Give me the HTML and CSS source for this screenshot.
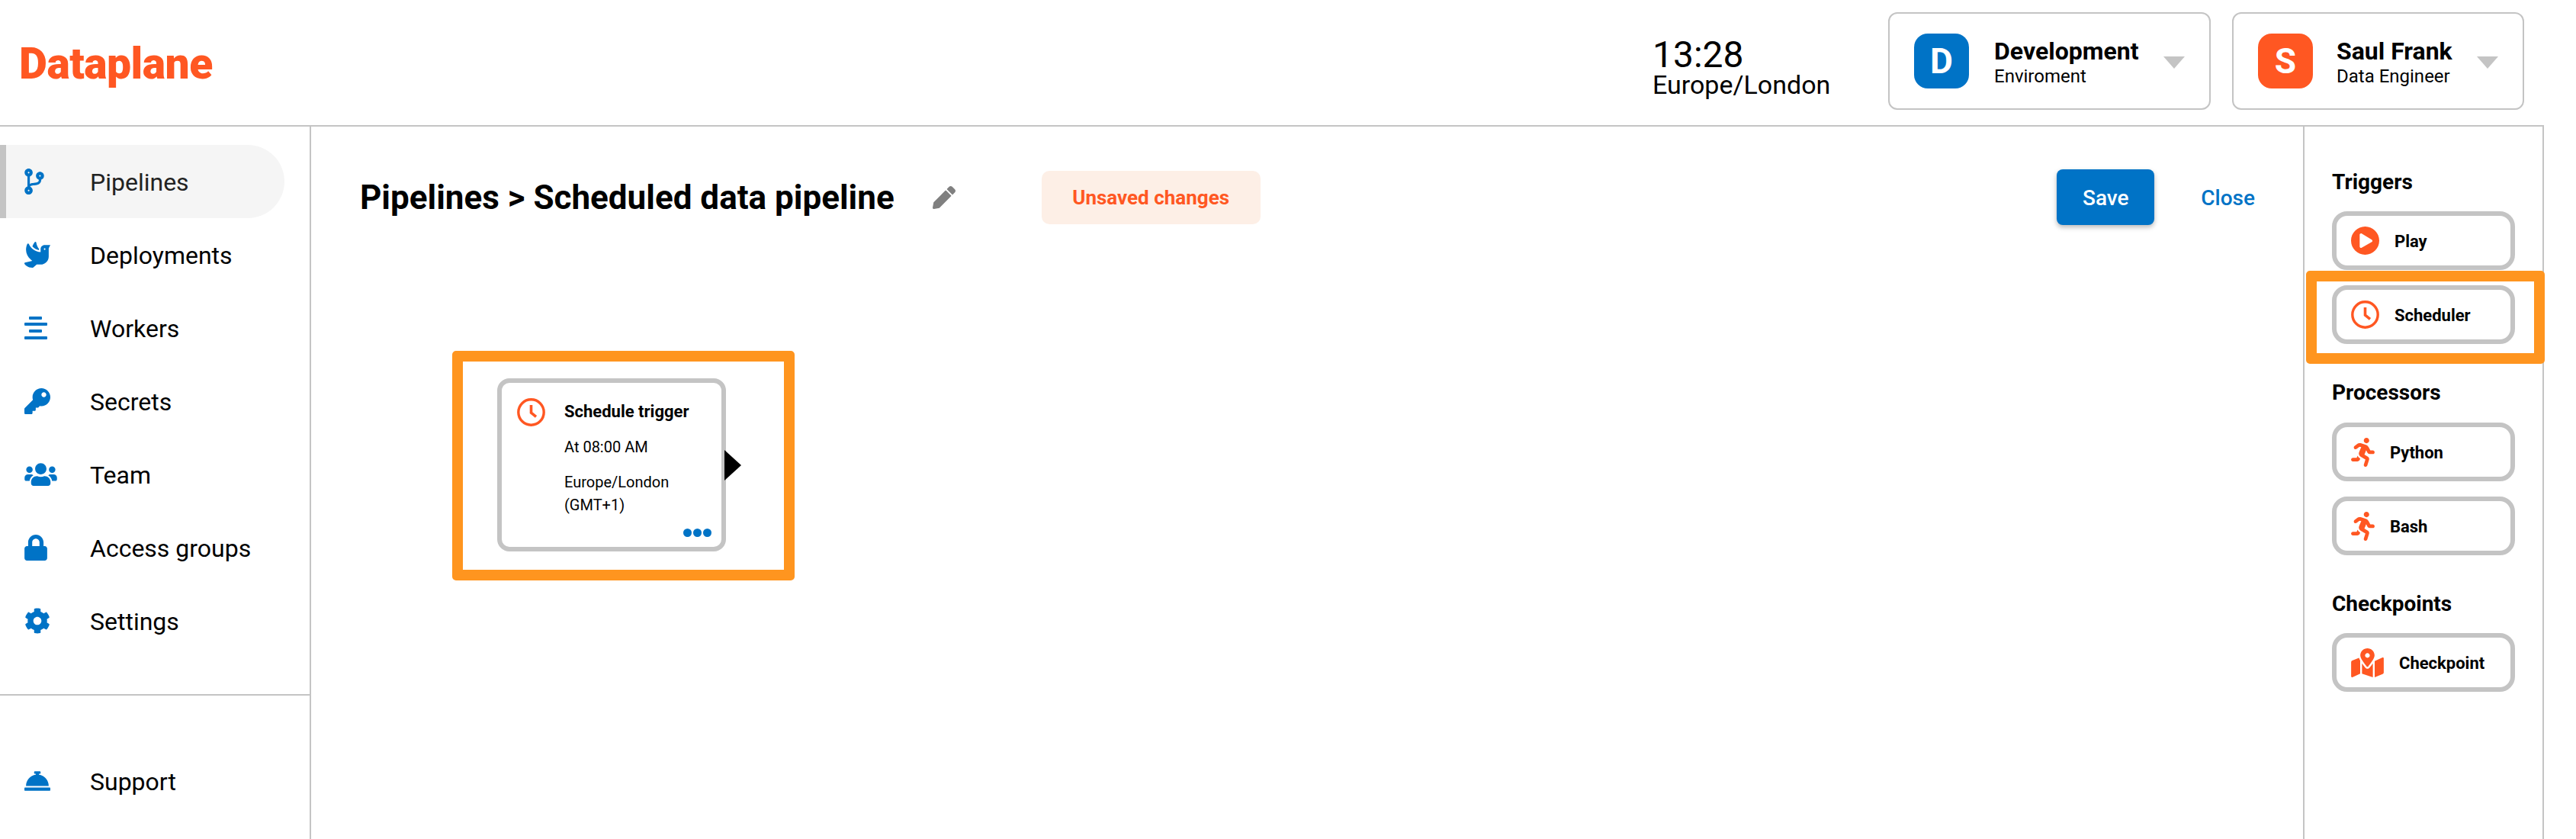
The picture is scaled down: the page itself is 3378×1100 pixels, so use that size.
FILE: index.html
```html
<!DOCTYPE html>
<html lang="en">
<head>
<meta charset="utf-8">
<title>Dataplane</title>
<link rel="stylesheet" href="styles.css">
</head>
<body>
<svg class="defs" width="0" height="0" aria-hidden="true">
  <symbol id="i-run" viewBox="0 0 416 512"><path d="M272 96c26.510 0 48-21.490 48-48S298.510 0 272 0s-48 21.490-48 48 21.490 48 48 48zM113.690 317.470l-14.800 34.530H32c-17.670 0-32 14.330-32 32s14.330 32 32 32h77.450c19.250 0 36.570-11.430 44.110-29.110l8.790-20.520-10.670-6.300c-17.320-10.230-30.060-25.370-37.990-42.600zM384 223.990h-44.030l-26.060-53.250c-12.500-25.550-35.450-44.230-61.780-50.940l-71.080-21.140c-28.300-6.800-57.770-.55-80.840 17.140l-39.670 30.410c-14.030 10.750-16.690 30.830-5.920 44.860s30.840 16.660 44.860 5.920l39.690-30.410c7.670-5.890 17.440-8 25.270-6.140l14.700 4.370-37.460 87.390c-12.620 29.480-1.310 64.010 26.300 80.310l84.980 50.170-27.470 87.730c-5.280 16.860 4.110 34.810 20.970 40.090 3.190 1 6.410 1.470 9.590 1.470 13.610 0 26.250-8.750 30.530-22.440l31.640-101.060c5.910-20.770-2.890-43.080-21.640-54.390l-61.240-36.140 31.310-78.280 20.270 41.390c8 16.340 24.920 26.890 43.060 26.890H384c17.670 0 32-14.330 32-32s-14.330-31.990-32-31.990z"/></symbol>
  <symbol id="i-clock" viewBox="0 0 37 37"><circle cx="18.500" cy="18.500" r="16.700" fill="none" stroke="currentColor" stroke-width="3.400"/><path d="M18.500 9v10.100l6.500 5.200" fill="none" stroke="currentColor" stroke-width="3.600"/></symbol>
</svg>
<div class="app">
  <header class="topbar">
    <div class="logo">Dataplane</div>
    <div class="top-right">
      <div class="clock">
        <div class="clock-time">13:28</div>
        <div class="clock-zone">Europe/London</div>
      </div>
      <div class="picker picker-env">
        <span class="avatar avatar-blue">D</span>
        <span class="picker-text"><strong>Development</strong><small>Enviroment</small></span>
        <span class="caret"></span>
      </div>
      <div class="picker picker-user">
        <span class="avatar avatar-orange">S</span>
        <span class="picker-text"><strong>Saul Frank</strong><small>Data Engineer</small></span>
        <span class="caret"></span>
      </div>
    </div>
  </header>
  <div class="workspace">
    <nav class="sidebar">
      <ul class="nav-list">
        <li class="nav-item active"><span class="nav-icon"><svg width="26" height="34" viewBox="0 0 384 512"><path d="M384 144c0-44.200-35.800-80-80-80s-80 35.800-80 80c0 36.400 24.300 67.100 57.500 76.800-.6 16.100-4.200 28.500-11 36.900-15.400 19.200-49.300 22.400-85.200 25.700-28.200 2.600-57.400 5.400-81.300 16.900v-144c32.500-10.200 56-40.500 56-76.300 0-44.200-35.800-80-80-80S0 35.800 0 80c0 35.800 23.500 66.100 56 76.300v199.300C23.500 365.900 0 396.200 0 432c0 44.200 35.800 80 80 80s80-35.800 80-80c0-34-21.200-63.100-51.200-74.600 3.100-5.200 7.800-9.800 14.900-13.400 16.200-8.200 40.400-10.400 66.100-12.800 42.200-3.900 90-8.400 118.200-43.400 14-17.400 21.100-39.800 21.600-67.900 31.600-10.800 54.400-40.700 54.400-75.900zM80 64c8.800 0 16 7.200 16 16s-7.200 16-16 16-16-7.200-16-16 7.200-16 16-16zm0 384c-8.800 0-16-7.200-16-16s7.200-16 16-16 16 7.200 16 16-7.200 16-16 16zm224-320c8.800 0 16 7.200 16 16s-7.200 16-16 16-16-7.200-16-16 7.200-16 16-16z"/></svg></span><span class="nav-label">Pipelines</span></li>
        <li class="nav-item"><span class="nav-icon"><svg width="34" height="34" viewBox="0 0 512 512"><path d="M288 167.200v-28.100c-28.200-36.300-47.100-79.300-54.100-125.200-2.100-13.500-19-18.800-27.800-8.300-21.100 24.900-37.700 54.100-48.900 86.500 34.200 38.300 80 64.600 130.800 75.100zM400 64c-44.200 0-80 35.900-80 80.100v59.400C215.600 197.300 127 133 87 41.800c-5.500-12.500-23.200-13.200-29-.9C41.400 76 32 115.200 32 156.600c0 70.800 34.100 136.900 85.100 185.900 13.200 12.700 26.100 23.200 38.900 32.800l-143.900 36C1.400 414-3.400 426.400 2.600 435.700 20 462.600 63 508.200 155.800 512c8 .3 16-2.600 22.100-7.900l65.200-56.100H320c88.400 0 160-71.500 160-159.900V128l32-64H400zm0 96.100c-8.800 0-16-7.200-16-16s7.200-16 16-16 16 7.200 16 16-7.200 16-16 16z"/></svg></span><span class="nav-label">Deployments</span></li>
        <li class="nav-item"><span class="nav-icon"><svg width="30" height="30" viewBox="0 0 30 30"><rect x="6" y="0" width="17" height="4" rx="1"/><rect x="0" y="8" width="30" height="4" rx="1"/><rect x="6" y="17" width="17" height="4" rx="1"/><rect x="0" y="26" width="30" height="4" rx="1"/></svg></span><span class="nav-label">Workers</span></li>
        <li class="nav-item"><span class="nav-icon"><svg width="34" height="34" viewBox="0 0 512 512"><path d="M512 176.001C512 273.203 433.202 352 336 352c-11.220 0-22.190-1.062-32.827-3.069l-24.012 27.014A23.999 23.999 0 0 1 261.223 384H224v40c0 13.255-10.745 24-24 24h-40v40c0 13.255-10.745 24-24 24H24c-13.255 0-24-10.745-24-24v-78.059c0-6.365 2.529-12.470 7.029-16.971l161.802-161.802C163.108 213.814 160 195.271 160 176 160 78.798 238.797.001 335.999 0 433.488-.001 512 78.511 512 176.001zM336 128c0 26.510 21.490 48 48 48s48-21.490 48-48-21.490-48-48-48-48 21.490-48 48z"/></svg></span><span class="nav-label">Secrets</span></li>
        <li class="nav-item"><span class="nav-icon"><svg width="43" height="34" viewBox="0 0 640 512"><path d="M96 224c35.300 0 64-28.700 64-64s-28.700-64-64-64-64 28.700-64 64 28.700 64 64 64zm448 0c35.300 0 64-28.700 64-64s-28.700-64-64-64-64 28.700-64 64 28.700 64 64 64zm32 32h-64c-17.600 0-33.500 7.100-45.100 18.600 40.300 22.100 68.900 62 75.100 109.400h66c17.700 0 32-14.300 32-32v-32c0-35.300-28.700-64-64-64zm-256 0c61.900 0 112-50.100 112-112S381.900 32 320 32 208 82.100 208 144s50.100 112 112 112zm76.800 32h-8.300c-20.800 10-43.900 16-68.500 16s-47.600-6-68.500-16h-8.300C179.600 288 128 339.600 128 403.200V432c0 26.500 21.500 48 48 48h288c26.500 0 48-21.500 48-48v-28.800c0-63.600-51.600-115.200-115.200-115.200zm-223.700-13.400C161.500 263.100 145.600 256 128 256H64c-35.300 0-64 28.700-64 64v32c0 17.700 14.300 32 32 32h65.900c6.300-47.400 34.900-87.300 75.200-109.400z"/></svg></span><span class="nav-label">Team</span></li>
        <li class="nav-item"><span class="nav-icon"><svg width="30" height="34" viewBox="0 0 448 512"><path d="M400 224h-24v-72C376 68.200 307.800 0 224 0S72 68.200 72 152v72H48c-26.500 0-48 21.500-48 48v192c0 26.500 21.500 48 48 48h352c26.500 0 48-21.500 48-48V272c0-26.500-21.500-48-48-48zm-104 0H152v-72c0-39.700 32.300-72 72-72s72 32.300 72 72v72z"/></svg></span><span class="nav-label">Access groups</span></li>
        <li class="nav-item"><span class="nav-icon"><svg width="34" height="34" viewBox="0 0 512 512"><path d="M487.400 315.700l-42.600-24.600c4.300-23.200 4.300-47 0-70.200l42.600-24.600c4.900-2.800 7.100-8.600 5.500-14-11.100-35.600-30-67.800-54.700-94.600-3.800-4.100-10-5.100-14.800-2.300L380.800 110c-17.900-15.400-38.500-27.300-60.800-35.100V25.800c0-5.600-3.900-10.500-9.400-11.700-36.700-8.200-74.300-7.800-109.200 0-5.500 1.200-9.400 6.100-9.400 11.700V75c-22.200 7.900-42.800 19.800-60.800 35.100L88.700 85.500c-4.900-2.800-11-1.900-14.800 2.300-24.700 26.700-43.600 58.900-54.700 94.600-1.700 5.400.6 11.200 5.500 14L67.300 221c-4.300 23.200-4.300 47 0 70.200l-42.600 24.600c-4.900 2.800-7.100 8.600-5.500 14 11.100 35.600 30 67.800 54.700 94.600 3.800 4.100 10 5.100 14.800 2.300l42.600-24.600c17.900 15.400 38.500 27.300 60.800 35.100v49.200c0 5.600 3.900 10.500 9.400 11.700 36.700 8.200 74.300 7.800 109.200 0 5.500-1.200 9.400-6.100 9.400-11.700v-49.200c22.200-7.900 42.800-19.800 60.800-35.100l42.600 24.600c4.900 2.800 11 1.900 14.800-2.300 24.700-26.700 43.600-58.900 54.700-94.600 1.500-5.500-.7-11.300-5.600-14.100zM256 336c-44.100 0-80-35.900-80-80s35.900-80 80-80 80 35.900 80 80-35.900 80-80 80z"/></svg></span><span class="nav-label">Settings</span></li>
      </ul>
      <ul class="nav-list nav-footer">
        <li class="nav-item"><span class="nav-icon"><svg width="34" height="34" viewBox="0 0 512 512"><path d="M288 130.540V112h16c8.840 0 16-7.160 16-16V80c0-8.840-7.160-16-16-16h-96c-8.840 0-16 7.160-16 16v16c0 8.840 7.160 16 16 16h16v18.540C115.490 146.090 32 239.180 32 352h448c0-112.820-83.490-205.910-192-221.460zM496 384H16c-8.840 0-16 7.160-16 16v32c0 8.840 7.160 16 16 16h480c8.840 0 16-7.160 16-16v-32c0-8.840-7.160-16-16-16z"/></svg></span><span class="nav-label">Support</span></li>
      </ul>
    </nav>
    <main class="editor">
      <div class="toolbar">
        <h1 class="page-title">Pipelines &gt; Scheduled data pipeline</h1>
        <svg class="pencil" width="30" height="30" viewBox="0 0 512 512"><path d="M497.900 142.100l-46.100 46.100c-4.700 4.700-12.300 4.700-17 0l-111-111c-4.700-4.700-4.700-12.300 0-17l46.100-46.100c18.700-18.700 49.100-18.700 67.900 0l60.100 60.100c18.800 18.700 18.800 49.100 0 67.900zM284.200 99.800L21.600 362.400.400 483.900c-2.900 16.400 11.400 30.600 27.800 27.800l121.500-21.300 262.600-262.600c4.700-4.700 4.700-12.300 0-17l-111-111c-4.800-4.700-12.400-4.700-17.100 0z"/></svg>
        <span class="badge">Unsaved changes</span>
        <button class="btn-save">Save</button>
        <button class="btn-close">Close</button>
      </div>
      <div class="highlight node-frame">
        <div class="node-card">
          <svg class="node-icon" width="37" height="37"><use href="#i-clock"/></svg>
          <div class="node-body">
            <div class="node-title">Schedule trigger</div>
            <div class="node-line">At 08:00 AM</div>
            <div class="node-line">Europe/London (GMT+1)</div>
          </div>
          <div class="node-dots"><i></i><i></i><i></i></div>
          <span class="node-port"></span>
        </div>
      </div>
    </main>
    <aside class="palette">
      <section class="palette-group">
        <h2>Triggers</h2>
        <div class="tool"><svg class="tool-icon" width="37" height="37" viewBox="8 8 496 496"><path d="M256 8C119 8 8 119 8 256s111 248 248 248 248-111 248-248S393 8 256 8zm115.700 272l-176 101c-15.800 8.800-35.700-2.500-35.700-21V152c0-18.400 19.800-29.800 35.700-21l176 107c16.400 9.200 16.400 32.900 0 42z"/></svg><span>Play</span></div>
        <div class="tool"><svg class="tool-icon" width="37" height="37"><use href="#i-clock"/></svg><span>Scheduler</span></div>
      </section>
      <section class="palette-group">
        <h2>Processors</h2>
        <div class="tool"><svg class="tool-icon" width="31" height="38"><use href="#i-run"/></svg><span>Python</span></div>
        <div class="tool"><svg class="tool-icon" width="31" height="38"><use href="#i-run"/></svg><span>Bash</span></div>
      </section>
      <section class="palette-group">
        <h2>Checkpoints</h2>
        <div class="tool"><svg class="tool-icon" width="43" height="38" viewBox="0 0 576 512"><path d="M288 0c-69.590 0-126 56.410-126 126 0 56.260 82.350 158.800 113.900 196.020 6.390 7.540 17.820 7.540 24.200 0C331.650 284.800 414 182.260 414 126 414 56.410 357.590 0 288 0zm0 168c-23.200 0-42-18.800-42-42s18.800-42 42-42 42 18.800 42 42-18.800 42-42 42zM20.120 215.950A32.006 32.006 0 0 0 0 245.660v250.320c0 11.320 11.430 19.060 21.940 14.860L160 448V214.920c-8.840-15.980-16.070-31.540-21.250-46.420L20.120 215.950zM288 359.670c-14.070 0-27.380-6.180-36.510-16.960-19.660-23.200-40.570-49.620-59.490-76.720V448l192 64V266c-18.920 27.090-39.820 53.520-59.490 76.720-9.130 10.770-22.440 16.950-36.510 16.950zm266.060-198.510L416 224v288l139.880-55.950A31.996 31.996 0 0 0 576 426.340V176.020c0-11.320-11.430-19.060-21.940-14.860z"/></svg><span>Checkpoint</span></div>
      </section>
      <div class="highlight tool-frame"></div>
    </aside>
  </div>
</div>
</body>
</html>
```
FILE: styles.css
```css
* { box-sizing: border-box; }
html, body { margin: 0; padding: 0; background: #fff; }
body { font-family: Roboto, "Liberation Sans", sans-serif; color: #000; overflow: hidden; height: 1100px; }
.defs { position: absolute; }
.app { width: 3336px; height: 1100px; display: flex; flex-direction: column; }

.topbar { height: 166px; flex: none; display: flex; align-items: center; border-bottom: 2px solid #c4c4c4; padding: 0 26px 4px 25px; justify-content: space-between; }
.logo { font-size: 57px; font-weight: 900; line-height: 1; color: #ff5722; letter-spacing: -0.5px; margin-top: 6px; }
.top-right { display: flex; align-items: center; }
.clock { margin-right: 77px; width: 232px; padding-top: 14px; }
.clock-time { font-size: 48px; line-height: 47px; font-weight: 400; }
.clock-zone { font-size: 34px; line-height: 32px; }
.picker { height: 128px; border: 2px solid #c4c4c4; border-radius: 12px; display: flex; align-items: center; padding-left: 32px; position: relative; }
.picker-env { width: 423px; margin-right: 28px; }
.picker-user { width: 383px; }
.avatar { width: 72px; height: 72px; border-radius: 18px; color: #fff; font-size: 46px; font-weight: 700; display: flex; align-items: center; justify-content: center; flex: none; }
.avatar-blue { background: #0073c6; }
.avatar-orange { background: #ff5722; }
.picker-text { margin-left: 33px; padding-top: 3px; display: flex; flex-direction: column; }
.picker-user .picker-text { margin-left: 31px; }
.picker-text strong { font-size: 32px; line-height: 36px; font-weight: 700; }
.picker-text small { font-size: 24px; line-height: 28px; margin-top: 1px; }
.caret { position: absolute; right: 32px; top: 56px; width: 0; height: 0; border-left: 14px solid transparent; border-right: 14px solid transparent; border-top: 16px solid #c4c4c4; }

.workspace { flex: 1; display: grid; grid-template-columns: 408px 1fr 316px; min-height: 0; }

.sidebar { border-right: 2px solid #c4c4c4; padding-top: 24px; }
.nav-list { list-style: none; margin: 0; padding: 0; }
.nav-item { height: 96px; width: 373px; display: flex; align-items: center; font-size: 32px; padding-left: 32px; color: #000; }
.nav-item.active { background: #f5f5f5; border-left: 8px solid #c4c4c4; padding-left: 24px; border-radius: 0 48px 48px 0; color: #222; }
.nav-icon { width: 86px; flex: none; display: flex; align-items: center; fill: #0073c6; }
.nav-label { padding-top: 2px; }
.nav-footer { margin-top: 48px; padding-top: 64px; border-top: 2px solid #c4c4c4; }

.editor { position: relative; min-width: 0; }
.toolbar { display: flex; align-items: center; padding: 56px 63px 0 64px; height: 129px; }
.page-title { margin: 0; font-size: 44px; line-height: 48px; font-weight: 700; }
.pencil { fill: #808080; margin-left: 50px; }
.badge { margin-left: 113px; width: 287px; height: 70px; border-radius: 10px; background: #fdefe6; color: #ff5722; font-size: 26px; font-weight: 700; display: flex; align-items: center; justify-content: center; }
.btn-save { margin-left: auto; width: 128px; height: 73px; border: 0; border-radius: 8px; background: #0073c6; color: #fff; font: 500 28px Roboto, sans-serif; padding: 2px 0 0; box-shadow: 0 3px 6px rgba(0,0,0,.28); }
.btn-close { margin-left: 61px; padding: 2px 0 0; border: 0; background: none; color: #0073c6; font: 500 28px Roboto, sans-serif; }

.highlight { position: absolute; border: 14px solid #ff951f; border-radius: 5px; }
.node-frame { left: 185px; top: 294px; width: 449px; height: 301px; padding: 22px 0 0 45px; }
.node-card { position: relative; width: 300px; height: 227px; border: 6px solid #c4c4c4; border-radius: 16px; background: #fff; padding: 20px 0 0 20px; display: flex; }
.node-icon { color: #ff5722; flex: none; }
.node-body { margin: 3px 0 0 25px; width: 190px; }
.node-title { font-size: 22px; font-weight: 700; line-height: 30px; }
.node-line { font-size: 20px; line-height: 30px; margin-top: 16px; width: 170px; }
.node-dots { position: absolute; right: 13px; bottom: 13px; display: flex; gap: 2px; }
.node-dots i { width: 11px; height: 11px; border-radius: 50%; background: #0073c6; }
.node-port { position: absolute; left: 292px; top: 88px; width: 0; height: 0; border-top: 20px solid transparent; border-bottom: 20px solid transparent; border-left: 22px solid #000; }

.palette { position: relative; border-left: 2px solid #c4c4c4; border-right: 2px solid #c4c4c4; padding: 54px 0 0 36px; display: flex; flex-direction: column; gap: 46px; }
.palette h2 { margin: 0 0 21px; font-size: 28px; line-height: 36px; font-weight: 700; }
.palette-group:first-child h2 { padding-top: 1px; height: 36px; }
.palette-group:last-of-type h2 { margin-bottom: 20px; }
.tool { width: 240px; height: 77px; border: 6px solid #c4c4c4; border-radius: 20px; display: flex; align-items: center; padding-left: 19px; margin-bottom: 20px; font-size: 22px; font-weight: 700; }
.tool span { padding-top: 2px; }
.palette-group .tool:last-child { margin-bottom: 0; }
.tool-icon { fill: #ff5722; color: #ff5722; margin-right: 20px; flex: none; }
.tool-frame { left: 2px; top: 189px; width: 313px; height: 122px; }
```
